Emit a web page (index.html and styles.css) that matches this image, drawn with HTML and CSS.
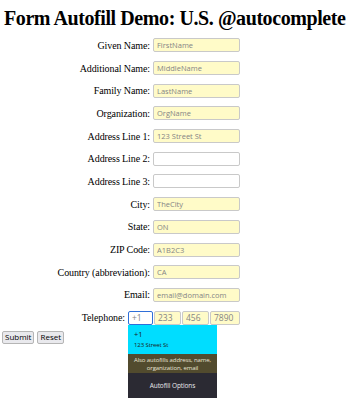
FILE: index.html
```
<!DOCTYPE html>
<html lang="en">
<head>
    <meta charset="UTF-8">
    <title>Form Autofill Demo</title>
    <link rel="stylesheet" href="styles.css">
</head>
<body>
    <h1>Form Autofill Demo: U.S. @autocomplete</h1>
    <form class="form">
        <div class="row"><label>Given Name:</label><input class="fill" placeholder="FirstName"></div>
        <div class="row"><label>Additional Name:</label><input class="fill" placeholder="MiddleName"></div>
        <div class="row"><label>Family Name:</label><input class="fill" placeholder="LastName"></div>
        <div class="row"><label>Organization:</label><input class="fill" placeholder="OrgName"></div>
        <div class="row"><label>Address Line 1:</label><input class="fill" placeholder="123 Street St"></div>
        <div class="row"><label>Address Line 2:</label><input></div>
        <div class="row"><label>Address Line 3:</label><input></div>
        <div class="row"><label>City:</label><input class="fill" placeholder="TheCity"></div>
        <div class="row"><label>State:</label><input class="fill" placeholder="ON"></div>
        <div class="row"><label>ZIP Code:</label><input class="fill" placeholder="A1B2C3"></div>
        <div class="row"><label>Country (abbreviation):</label><input class="fill" placeholder="CA"></div>
        <div class="row"><label>Email:</label><input class="fill" placeholder="email@domain.com"></div>
        <div class="row tel-row">
            <label>Telephone:</label>
            <div class="tel">
                <input class="fill cc focus" placeholder="+1">
                <input class="fill part" placeholder="233">
                <input class="fill part" placeholder="456">
                <input class="fill last" placeholder="7890">
                <div class="popup">
                    <div class="pick">
                        <div class="pick-main">+1</div>
                        <div class="pick-sub">123 Street St</div>
                    </div>
                    <div class="also">Also autofills address, name, organization, email</div>
                    <div class="opts">Autofill Options</div>
                </div>
            </div>
        </div>
        <div class="actions">
            <button type="button">Submit</button>
            <button type="button">Reset</button>
        </div>
    </form>
</body>
</html>
```

FILE: styles.css
```
html, body {
    min-height: 400px;
}
body {
    margin: 0;
    font-family: "Liberation Serif", serif;
    color: #000;
    background: #fff;
}
h1 {
    font-size: 20px;
    letter-spacing: -0.42px;
    margin: 0;
    padding: 7px 0 0 4px;
    height: 34px;
    box-sizing: border-box;
    line-height: 22px;
    white-space: nowrap;
}
.form {
    width: 240px;
}
.row {
    display: flex;
    justify-content: flex-end;
    align-items: center;
    gap: 3px;
    height: 22.7px;
    font-size: 10px;
    letter-spacing: -0.1px;
}
input {
    width: 87px;
    height: 14px;
    box-sizing: border-box;
    margin: 0;
    padding: 0 3px;
    border: 1px solid #c9c9c9;
    border-radius: 2px;
    background: #fff;
    font-family: "Open Sans", sans-serif;
    font-size: 7.5px;
    letter-spacing: 0;
    outline: none;
}
input.fill {
    background: #fffbc8;
}
input::placeholder {
    color: #858585;
}
.tel {
    position: relative;
    display: flex;
    gap: 1px;
}
.tel input {
    font-size: 8.5px;
}
.tel .cc {
    width: 25px;
}
.tel .part {
    width: 27px;
}
.tel .last {
    width: 30px;
}
.tel .focus {
    border: 1px solid #2f6fd8;
    background: #fff;
}
.popup {
    position: absolute;
    left: 0;
    top: 14px;
    width: 89px;
    font-family: "Open Sans", sans-serif;
    z-index: 2;
}
.pick {
    background: #00ddff;
    height: 29px;
    padding: 3px 6px 0;
    box-sizing: border-box;
    color: #1c1b22;
}
.pick-main {
    font-size: 7.5px;
    line-height: 12px;
}
.pick-sub {
    font-size: 6px;
    line-height: 10px;
}
.also {
    background: #524b2e;
    color: #e8e4d4;
    font-size: 6px;
    line-height: 8px;
    height: 19px;
    box-sizing: border-box;
    padding: 2px 2px 0;
    text-align: center;
}
.opts {
    background: #2b2a33;
    color: #e8e8ec;
    font-size: 6.5px;
    height: 25px;
    line-height: 25px;
    text-align: center;
}
.actions {
    display: flex;
    gap: 3px;
    padding: 2px 0 0 2px;
}
button {
    font-family: "Open Sans", sans-serif;
    font-size: 8px;
    height: 13px;
    padding: 0 2px;
    border: 1px solid #b5b5b5;
    border-radius: 2px;
    background: #e9e9ed;
    line-height: 10px;
}
```
